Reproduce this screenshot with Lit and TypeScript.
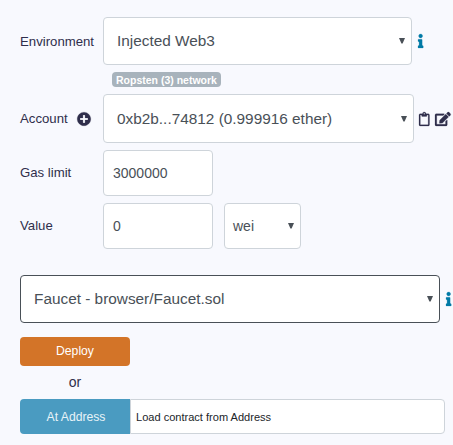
import { LitElement, html, svg, css } from "lit";
import { customElement, property } from "lit/decorators.js";

const icons: Record<string, { w: number; d: string }> = {
  info: {
    w: 192,
    d: "M20 424.229h20V279.771H20c-11.046 0-20-8.954-20-20V212c0-11.046 8.954-20 20-20h112c11.046 0 20 8.954 20 20v212.229h20c11.046 0 20 8.954 20 20V492c0 11.046-8.954 20-20 20H20c-11.046 0-20-8.954-20-20v-47.771c0-11.046 8.954-20 20-20zM96 0C56.235 0 24 32.235 24 72s32.235 72 72 72 72-32.235 72-72S135.764 0 96 0z",
  },
  plus: {
    w: 512,
    d: "M256 8C119 8 8 119 8 256s111 248 248 248 248-111 248-248S393 8 256 8zm144 276c0 6.6-5.4 12-12 12h-92v92c0 6.6-5.4 12-12 12h-56c-6.6 0-12-5.4-12-12v-92h-92c-6.6 0-12-5.4-12-12v-56c0-6.6 5.4-12 12-12h92v-92c0-6.6 5.4-12 12-12h56c6.6 0 12 5.4 12 12v92h92c6.6 0 12 5.4 12 12v56z",
  },
  clipboard: {
    w: 384,
    d: "M336 64h-80c0-35.3-28.7-64-64-64s-64 28.7-64 64H48C21.5 64 0 85.5 0 112v352c0 26.5 21.5 48 48 48h288c26.5 0 48-21.5 48-48V112c0-26.5-21.5-48-48-48zM192 40c13.3 0 24 10.7 24 24s-10.7 24-24 24-24-10.7-24-24 10.7-24 24-24zm144 418c0 3.3-2.7 6-6 6H54c-3.3 0-6-2.7-6-6V118c0-3.3 2.7-6 6-6h42v36c0 6.6 5.4 12 12 12h168c6.6 0 12-5.4 12-12v-36h42c3.3 0 6 2.7 6 6z",
  },
  edit: {
    w: 576,
    d: "M402.6 83.2l90.2 90.2c3.8 3.8 3.8 10 0 13.8L274.4 405.6l-92.8 10.3c-12.4 1.4-22.9-9.1-21.5-21.5l10.3-92.8L388.8 83.2c3.8-3.8 10-3.8 13.8 0zm162-22.9l-48.8-48.8c-15.2-15.2-39.9-15.2-55.2 0l-35.4 35.4c-3.8 3.8-3.8 10 0 13.8l90.2 90.2c3.8 3.8 10 3.8 13.8 0l35.4-35.4c15.2-15.3 15.2-40 0-55.2zM384 346.2V448H64V128h229.8c3.2 0 6.2-1.3 8.5-3.5l40-40c7.6-7.6 2.2-20.5-8.5-20.5H48C21.5 64 0 85.5 0 112v352c0 26.5 21.5 48 48 48h352c26.5 0 48-21.5 48-48V306.2c0-10.7-12.9-16-20.5-8.5l-40 40c-2.2 2.3-3.5 5.3-3.5 8.5z",
  },
};

@customElement("ui-icon")
export class UiIcon extends LitElement {
  @property() name = "info";
  static styles = css`
    :host { display: block; flex: none; height: 14px; }
    svg { display: block; height: 100%; width: auto; fill: currentColor; stroke: currentColor; stroke-width: 8; }
  `;
  render() {
    const icon = icons[this.name];
    return html`<svg viewBox="0 0 ${icon.w} 512" overflow="visible">${svg`<path d=${icon.d}></path>`}</svg>`;
  }
}

@customElement("select-box")
export class SelectBox extends LitElement {
  @property() value = "";
  static styles = css`
    :host {
      display: flex;
      flex: none;
      box-sizing: border-box;
      align-items: center;
      justify-content: space-between;
      border: 1px solid #ced4da;
      border-radius: 4px;
      background: #fff;
      color: #495057;
      white-space: nowrap;
    }
    svg { display: block; width: 6px; height: 6px; fill: #495057; }
  `;
  render() {
    return html`<span>${this.value}</span><svg viewBox="0 0 6 6"><path d="M0 0H6L3.6 5.6H2.4Z"></path></svg>`;
  }
}

@customElement("app-root")
export class AppRoot extends LitElement {
  static styles = css`
    :host {
      display: block;
      box-sizing: border-box;
      width: 453px;
      height: 445px;
      padding: 17px 0 0 20px;
      overflow: hidden;
      background: #f8f9fe;
      color: #2f2e4b;
      font-family: "Liberation Sans", Arial, sans-serif;
      font-size: 13.2px;
    }
    .row { display: flex; align-items: center; }
    .label { flex: none; display: flex; align-items: center; width: 83px; white-space: nowrap; }
    .gas .label, .value .label { padding-bottom: 2px; }
    .plus { margin-left: 9px; }
    .select { height: 48px; padding: 0 6px 0 13px; font-size: 15.36px; }
    .environment { width: 309px; }
    .account { width: 311px; height: 49px; }
    .contract { width: 420px; border-color: #495057; }
    .unit { width: 77px; height: 46px; margin-left: 11px; padding-left: 8px; font-size: 14px; }
    .info { margin-left: 5.6px; color: #007aa6; }
    .clip { margin-left: 5.4px; }
    .edit { margin-left: 5px; }
    .badge {
      display: block;
      box-sizing: border-box;
      width: 109px;
      height: 15px;
      margin: 7px 0 7px 92px;
      border-radius: 4px;
      background: #a8b3bc;
      color: #fff;
      font-size: 10.5px;
      font-weight: 700;
      line-height: 16px;
      text-align: center;
      white-space: nowrap;
    }
    .input {
      box-sizing: border-box;
      width: 110px;
      height: 46px;
      padding: 0 9px;
      border: 1px solid #ced4da;
      border-radius: 4px;
      background: #fff;
      color: #495057;
      font-size: 14px;
      line-height: 44px;
    }
    .gas, .value { margin-top: 7px; }
    .target { margin-top: 26px; }
    .button {
      flex: none;
      width: 110px;
      color: #fff;
      font-size: 12.2px;
      text-align: center;
    }
    .deploy { height: 29px; margin-top: 14px; border-radius: 4px; background: #d37428; line-height: 28px; }
    .or { width: 110px; height: 33px; font-size: 14px; line-height: 33px; text-align: center; }
    .at { box-sizing: border-box; height: 35px; padding-left: 2px; border-radius: 4px 0 0 4px; background: #4a9bc1; color: #e8f3f8; line-height: 36px; }
    .address {
      box-sizing: border-box;
      width: 315px;
      height: 35px;
      padding-left: 5px;
      border: 1px solid #ced4da;
      border-radius: 0 4px 4px 0;
      background: #fff;
      color: #212529;
      font-size: 11.05px;
      line-height: 35px;
    }
  `;
  render() {
    return html`
      <div class="row">
        <div class="label">Environment</div>
        <select-box class="select environment" value="Injected Web3"></select-box>
        <ui-icon class="info" name="info"></ui-icon>
      </div>
      <div class="badge">Ropsten (3) network</div>
      <div class="row">
        <div class="label">Account<ui-icon class="plus" name="plus"></ui-icon></div>
        <select-box class="select account" value="0xb2b...74812 (0.999916 ether)"></select-box>
        <ui-icon class="clip" name="clipboard"></ui-icon>
        <ui-icon class="edit" name="edit"></ui-icon>
      </div>
      <div class="row gas">
        <div class="label">Gas limit</div>
        <div class="input">3000000</div>
      </div>
      <div class="row value">
        <div class="label">Value</div>
        <div class="input">0</div>
        <select-box class="select unit" value="wei"></select-box>
      </div>
      <div class="row target">
        <select-box class="select contract" value="Faucet - browser/Faucet.sol"></select-box>
        <ui-icon class="info" name="info"></ui-icon>
      </div>
      <div class="button deploy">Deploy</div>
      <div class="or">or</div>
      <div class="row">
        <div class="button at">At Address</div>
        <div class="address">Load contract from Address</div>
      </div>
    `;
  }
}
